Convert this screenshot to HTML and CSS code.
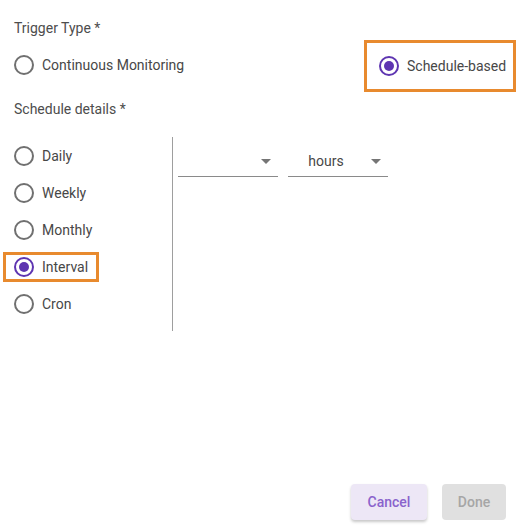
FILE: index.html
```html
<!DOCTYPE html>
<html>
<head>
<meta charset="utf-8">
<link rel="stylesheet" href="styles.css">
</head>
<body>
<div class="dialog">
  <div class="label label-trigger">Trigger Type *</div>
  <div class="trigger-row">
    <div class="radio-item continuous"><span class="radio"></span><span>Continuous Monitoring</span></div>
    <div class="radio-item highlight highlight-right"><span class="radio checked"></span><span>Schedule-based</span></div>
  </div>
  <div class="label label-schedule">Schedule details *</div>
  <div class="schedule">
    <div class="options">
      <div class="opt-row"><div class="radio-item"><span class="radio"></span><span>Daily</span></div></div>
      <div class="opt-row"><div class="radio-item"><span class="radio"></span><span>Weekly</span></div></div>
      <div class="opt-row"><div class="radio-item"><span class="radio"></span><span>Monthly</span></div></div>
      <div class="opt-row"><div class="radio-item highlight highlight-left"><span class="radio checked"></span><span>Interval</span></div></div>
      <div class="opt-row"><div class="radio-item"><span class="radio"></span><span>Cron</span></div></div>
    </div>
    <div class="panel">
      <div class="select"><span class="value"></span><span class="arrow"></span></div>
      <div class="select"><span class="value">hours</span><span class="arrow"></span></div>
    </div>
  </div>
  <div class="footer">
    <button class="btn btn-cancel">Cancel</button>
    <button class="btn btn-done">Done</button>
  </div>
</div>
</body>
</html>
```

FILE: styles.css
```css
html, body {
  margin: 0;
  padding: 0;
  background: #ffffff;
}
body {
  font-family: Roboto, "Liberation Sans", sans-serif;
  font-size: 14px;
  color: #474747;
}
.dialog {
  box-sizing: border-box;
  height: 526px;
  display: flex;
  flex-direction: column;
  padding: 0 20px 6px 14px;
}
.label {
  line-height: 20px;
  color: #4d4d4d;
}
.label-trigger {
  margin-top: 18px;
}
.trigger-row {
  display: flex;
  justify-content: space-between;
  align-items: flex-start;
  margin-top: 2px;
  margin-right: -10px;
}
.continuous {
  margin-top: 15px;
}
.radio-item {
  display: inline-flex;
  align-items: center;
  gap: 8px;
  line-height: 20px;
  color: #474747;
  white-space: nowrap;
}
.radio {
  box-sizing: border-box;
  width: 20px;
  height: 20px;
  border: 2px solid #707070;
  border-radius: 50%;
  display: inline-flex;
  align-items: center;
  justify-content: center;
  flex: none;
}
.radio.checked {
  border-color: #5e35b1;
}
.radio.checked::after {
  content: "";
  width: 10px;
  height: 10px;
  border-radius: 50%;
  background: #5e35b1;
}
.highlight {
  border: 3px solid #e88a2e;
}
.highlight-right {
  height: 52px;
  box-sizing: border-box;
  padding: 0 6px 0 12px;
  width: 152px;
}
.highlight-left {
  margin-left: -11px;
  padding: 2px 8px 2px 8px;
  height: 30px;
  box-sizing: border-box;
}
.label-schedule {
  margin-top: 7px;
}
.schedule {
  display: flex;
  margin-top: 18px;
}
.options {
  width: 158px;
  display: flex;
  flex-direction: column;
  padding-bottom: 9px;
}
.opt-row {
  height: 37px;
  display: flex;
  align-items: center;
}
.panel {
  border-left: 1px solid #9e9e9e;
  padding: 9px 0 0 5px;
  display: flex;
  gap: 10px;
  align-items: flex-start;
}
.select {
  width: 100px;
  height: 31px;
  box-sizing: border-box;
  border-bottom: 1px solid #8a8a8a;
  display: flex;
  align-items: center;
}
.select .value {
  flex: 1;
  text-align: center;
  color: #474747;
}
.select .arrow {
  width: 24px;
  display: flex;
  justify-content: center;
}
.select .arrow::after {
  content: "";
  border-left: 5px solid transparent;
  border-right: 5px solid transparent;
  border-top: 5px solid #757575;
}
.footer {
  margin-top: auto;
  display: flex;
  justify-content: flex-end;
  gap: 15px;
}
.btn {
  font-family: Roboto, "Liberation Sans", sans-serif;
  font-size: 14px;
  font-weight: 500;
  border: none;
  border-radius: 4px;
  height: 36px;
  padding: 0;
}
.btn-cancel {
  width: 76px;
  background: #ede7f6;
  color: #8a63cc;
  box-shadow: 0 2px 3px rgba(0,0,0,0.22);
}
.btn-done {
  width: 64px;
  background: #e0e0e0;
  color: #a6a6a6;
}
```
